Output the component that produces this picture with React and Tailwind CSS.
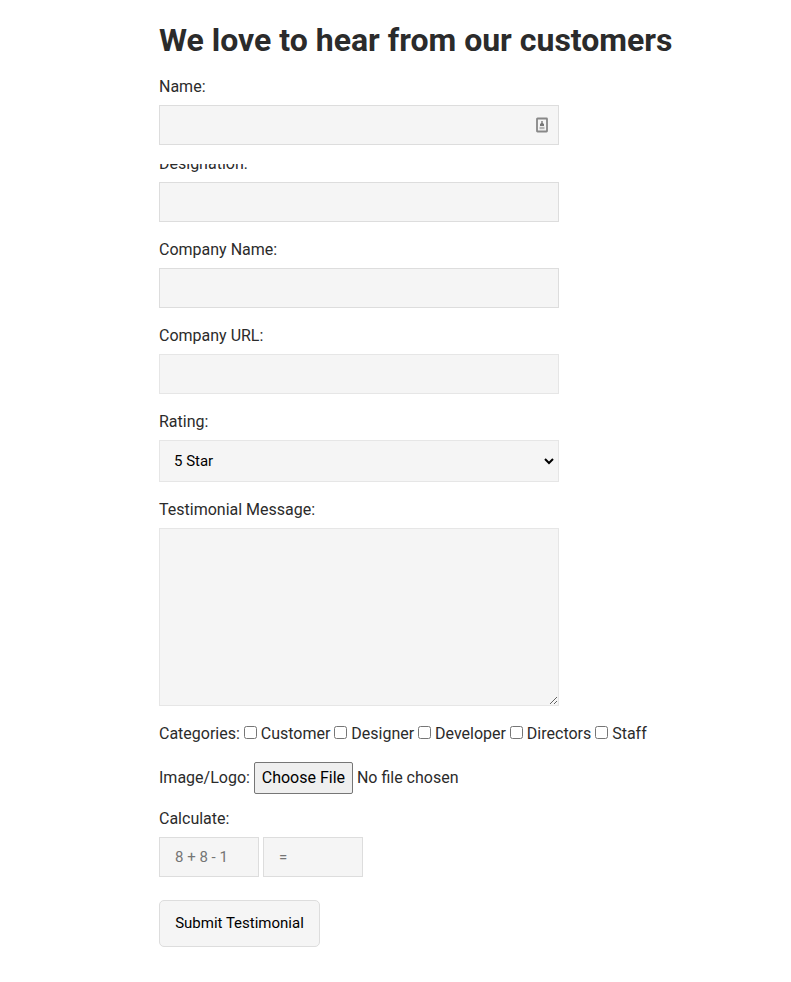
const box = "block w-[400px] h-10 bg-[#f5f5f5] border outline-none";

function Label({ children, className = "" }) {
  return <div className={"h-[26px] leading-[26px] " + className}>{children}</div>;
}

function Check({ label }) {
  return (
    <label className="flex">
      <input type="checkbox" className="w-[13px] h-[13px] mt-[5px] mr-1" />
      {label}
    </label>
  );
}

export default function App() {
  return (
    <main className="w-[791px] h-[982px] overflow-hidden bg-white pl-[159px] pt-5 text-[16px] text-[#2b2b2b] font-['Roboto',sans-serif]">
      <h1 className="text-[32px] leading-[40px] font-bold whitespace-nowrap">We love to hear from our customers</h1>
      <Label className="mt-[14px] mb-[5px]">Name:</Label>
      <div className={box + " border-[#dddddd] flex items-center justify-end pr-[10px]"}>
        <svg width="12" height="16" viewBox="0 0 12 16" fill="none">
          <rect x="1" y="1.5" width="10" height="13" rx="0.5" stroke="#888" strokeWidth="1.8" />
          <path d="M5.3 4h1.4v2l1.3 1v2H4V7l1.3-1z" fill="#777" />
          <path d="M3.5 9.8h5v2.4h-5z" fill="#b5b5b5" />
        </svg>
      </div>
      <div className="mt-[19px] mb-[5px] h-[13px] overflow-hidden"><Label className="-mt-[13px]">Designation:</Label></div>
      <input className={box + " border-[#dddddd]"} />
      <Label className="mt-[15px] mb-[5px]">Company Name:</Label>
      <input className={box + " border-[#dddddd]"} />
      <Label className="mt-[15px] mb-[5px]">Company URL:</Label>
      <input className={box + " border-[#e6e6e6]"} />
      <Label className="mt-[15px] mb-[5px]">Rating:</Label>
      <div className="w-[400px] h-[42px] bg-[#f5f5f5] border border-[#e6e6e6]">
        <select className="block w-[398px] h-10 bg-transparent pl-[10px] pr-[10px] -translate-x-px indent-px text-[15px] text-black outline-none">
          <option>5 Star</option>
        </select>
      </div>
      <Label className="mt-[15px] mb-[5px]">Testimonial Message:</Label>
      <textarea className="block w-[400px] h-[178px] bg-[#f5f5f5] border border-[#e6e6e6]" />
      <div className="mt-[15px] h-[26px] leading-[26px] flex gap-[3.9px]">
        <span>Categories:</span>
        <Check label="Customer" />
        <Check label="Designer" />
        <Check label="Developer" />
        <Check label="Directors" />
        <Check label="Staff" />
      </div>
      <div className="mt-[15px] h-8 flex items-center gap-1">
        <span>Image/Logo:</span>
        <button className="w-[99px] h-8 bg-[#efefef] border border-[#767676] rounded-[2px] text-black">Choose File</button>
        <span>No file chosen</span>
      </div>
      <Label className="mt-[12px] mb-[5px]">Calculate:</Label>
      <div className="flex gap-1 text-[15px] text-[#757575]">
        <div className="w-[100px] h-10 bg-[#f5f5f5] border border-[#dddddd] px-[15px] leading-[38px]">8 + 8 - 1</div>
        <div className="w-[100px] h-10 bg-[#f5f5f5] border border-[#dddddd] px-[15px] leading-[38px]">=</div>
      </div>
      <button className="mt-[23px] w-[161px] h-[47px] bg-[#f5f5f5] border border-[#dddddd] rounded-[5px] text-[15px] text-black">Submit Testimonial</button>
    </main>
  );
}
